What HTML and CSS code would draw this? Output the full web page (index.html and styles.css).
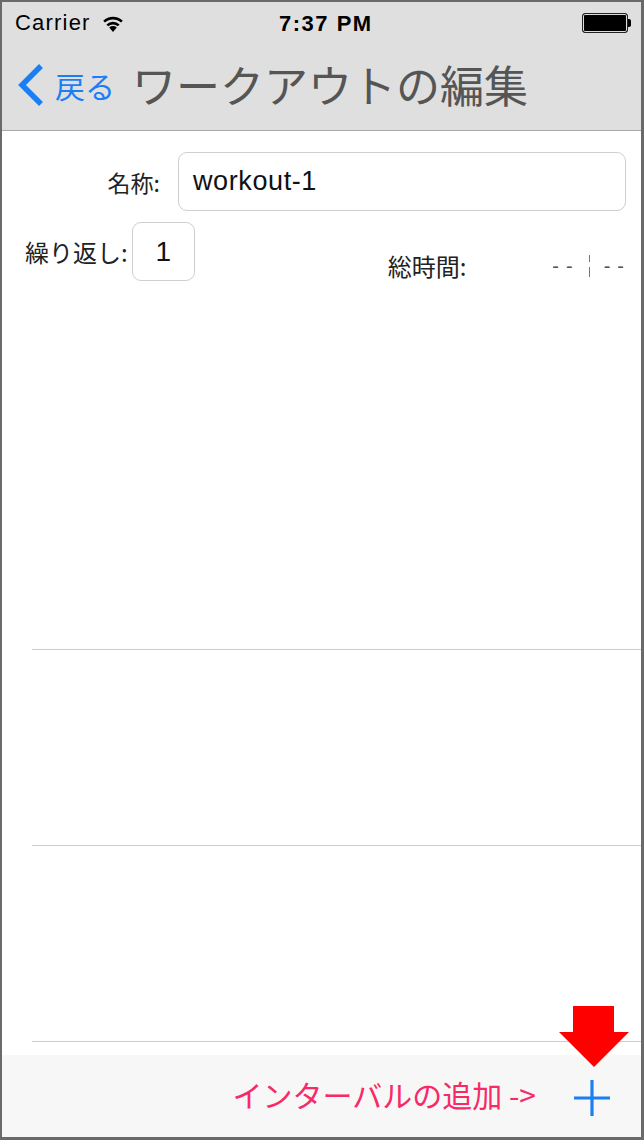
FILE: index.html
```html
<!DOCTYPE html>
<html lang="ja">
<head>
<meta charset="utf-8">
<title>ワークアウトの編集</title>
<link rel="stylesheet" href="styles.css">
</head>
<body>
<div class="frame">
  <div class="status">
    <div class="status-left">
      <span class="carrier">Carrier</span>
      <svg class="wifi" width="24" height="18" viewBox="0 0 24 18">
        <path d="M12 18 L8.2 13.6 A5.6 5.6 0 0 1 15.8 13.6 Z" fill="#000"/>
        <path d="M6.3 11.4 A8.4 8.4 0 0 1 17.7 11.4" fill="none" stroke="#000" stroke-width="2.6"/>
        <path d="M3.1 7.6 A13 13 0 0 1 20.9 7.6" fill="none" stroke="#000" stroke-width="2.6"/>
      </svg>
    </div>
    <div class="time">7:37 PM</div>
    <div class="battery"><div class="battery-body"></div><div class="battery-nub"></div></div>
  </div>
  <div class="nav">
    <svg class="chevron" width="28" height="44" viewBox="0 0 28 44">
      <polyline points="24,3 5,22 24,41" fill="none" stroke="#1a7ff5" stroke-width="5.5" stroke-linejoin="miter"/>
    </svg>
    <span class="back">戻る</span>
    <span class="title">ワークアウトの編集</span>
  </div>
  <div class="content">
    <div class="name-row">
      <label class="name-label">名称:</label>
      <div class="field">workout-1</div>
    </div>
    <div class="repeat-row">
      <span class="repeat-label">繰り返し:</span>
      <div class="repeat-box">1</div>
      <span class="total-label">総時間:</span>
      <span class="total-value"><span class="dashes">--</span><span class="colon"></span><span class="dashes">--</span></span>
    </div>
    <div class="list">
      <div class="list-row"></div>
      <div class="list-row"></div>
      <div class="list-row"></div>
    </div>
  </div>
  <div class="toolbar">
    <span class="add-text">インターバルの追加 -&gt;</span>
    <svg class="plus" width="36" height="36" viewBox="0 0 36 36">
      <path d="M18 0 V36 M0 18 H36" stroke="#1a7ff5" stroke-width="3.2"/>
    </svg>
    <svg class="arrow" width="72" height="62" viewBox="0 0 72 62">
      <polygon points="15,0 56,0 56,26 71,26 36,61 1,26 15,26" fill="#ff0000"/>
    </svg>
  </div>
</div>
</body>
</html>
```

FILE: styles.css
```css
html, body {
  margin: 0;
  padding: 0;
  background: #fff;
}
.frame {
  box-sizing: border-box;
  width: 644px;
  height: 1140px;
  border-style: solid;
  border-color: #6a6a6a;
  border-width: 2px 3px 3px 2px;
  display: flex;
  flex-direction: column;
  font-family: "Noto Sans CJK JP", "Noto Sans", sans-serif;
  overflow: hidden;
}
.status {
  height: 38px;
  background: #dfdfdf;
  display: flex;
  align-items: center;
  position: relative;
  padding: 3px 10px 0 13px;
  box-sizing: border-box;
}
.status-left {
  display: flex;
  align-items: center;
  gap: 10px;
  flex: 1;
}
.carrier {
  font-family: "Liberation Sans", Arial, sans-serif;
  font-size: 22px;
  letter-spacing: 1.2px;
  color: #000;
}
.wifi {
  margin-top: 1px;
}
.time {
  font-family: "Liberation Sans", Arial, sans-serif;
  font-weight: bold;
  font-size: 22px;
  letter-spacing: 1.5px;
  color: #000;
  position: absolute;
  left: 277px;
  top: 9px;
}
.battery {
  display: flex;
  align-items: center;
}
.battery-body {
  box-sizing: border-box;
  width: 46px;
  height: 20px;
  border: 1.5px solid #222;
  border-radius: 3px;
  background: #000;
  box-shadow: inset 0 0 0 1px #ddd;
}
.battery-nub {
  width: 3px;
  height: 8px;
  background: #000;
  border-radius: 0 2px 2px 0;
}
.nav {
  height: 90px;
  background: #dfdfdf;
  border-bottom: 1px solid #a8a8a8;
  display: flex;
  align-items: center;
  padding-left: 15px;
}
.chevron {
  flex: none;
}
.back {
  color: #1a7ff5;
  font-size: 30px;
  margin-left: 10px;
  line-height: 1;
}
.title {
  color: #555;
  font-size: 44px;
  margin-left: 17px;
  line-height: 1;
  margin-top: -2px;
}
.content {
  flex: 1;
  display: flex;
  flex-direction: column;
  background: #fff;
}
.name-row {
  display: flex;
  align-items: center;
  margin-top: 21px;
  padding-right: 15px;
}
.name-label {
  width: 158px;
  text-align: right;
  font-size: 23px;
  color: #222;
  flex: none;
}
.field {
  box-sizing: border-box;
  flex: 1;
  margin-left: 18px;
  height: 59px;
  border: 1px solid #cfcfcf;
  border-radius: 9px;
  display: flex;
  align-items: center;
  padding-left: 14px;
  font-family: "Liberation Sans", Arial, sans-serif;
  font-size: 27px;
  letter-spacing: 0.6px;
  color: #111;
}
.repeat-row {
  display: flex;
  align-items: center;
  margin-top: 9px;
  padding-left: 23px;
  padding-right: 17px;
}
.repeat-label {
  font-size: 24px;
  color: #222;
}
.repeat-box {
  box-sizing: border-box;
  width: 63px;
  height: 59px;
  margin-left: 4px;
  border: 1px solid #cfcfcf;
  border-radius: 9px;
  display: flex;
  align-items: center;
  justify-content: center;
  font-family: "Liberation Sans", Arial, sans-serif;
  font-size: 28px;
  color: #111;
}
.total-label {
  align-self: flex-start;
  margin-top: 28px;
  margin-left: 193px;
  font-size: 24px;
  color: #222;
}
.total-value {
  align-self: flex-start;
  margin-top: 31px;
  margin-left: auto;
  display: flex;
  align-items: center;
  gap: 9px;
  height: 30px;
}
.dashes {
  font-family: "Liberation Sans", Arial, sans-serif;
  font-size: 20px;
  letter-spacing: 7px;
  color: #555;
  line-height: 1;
}
.dashes:last-child {
  margin-right: -7px;
}
.colon {
  width: 1px;
  height: 22px;
  background: linear-gradient(#777 0 7px, transparent 7px 12px, #777 12px 22px);
  margin-right: 5px;
}
.list {
  flex: 1;
  display: flex;
  flex-direction: column;
  justify-content: flex-end;
  padding-bottom: 13px;
}
.list-row {
  box-sizing: border-box;
  height: 196px;
  margin-left: 30px;
  border-bottom: 1px solid #cdcdcd;
}
.toolbar {
  height: 82px;
  background: #f7f7f7;
  display: flex;
  align-items: center;
  justify-content: flex-end;
  padding-right: 31px;
  position: relative;
}
.add-text {
  color: #f72a68;
  font-size: 30px;
  margin-right: 38px;
  margin-top: -4px;
}
.plus {
  margin-top: 4px;
}
.arrow {
  position: absolute;
  left: 556px;
  top: -49px;
}
```
